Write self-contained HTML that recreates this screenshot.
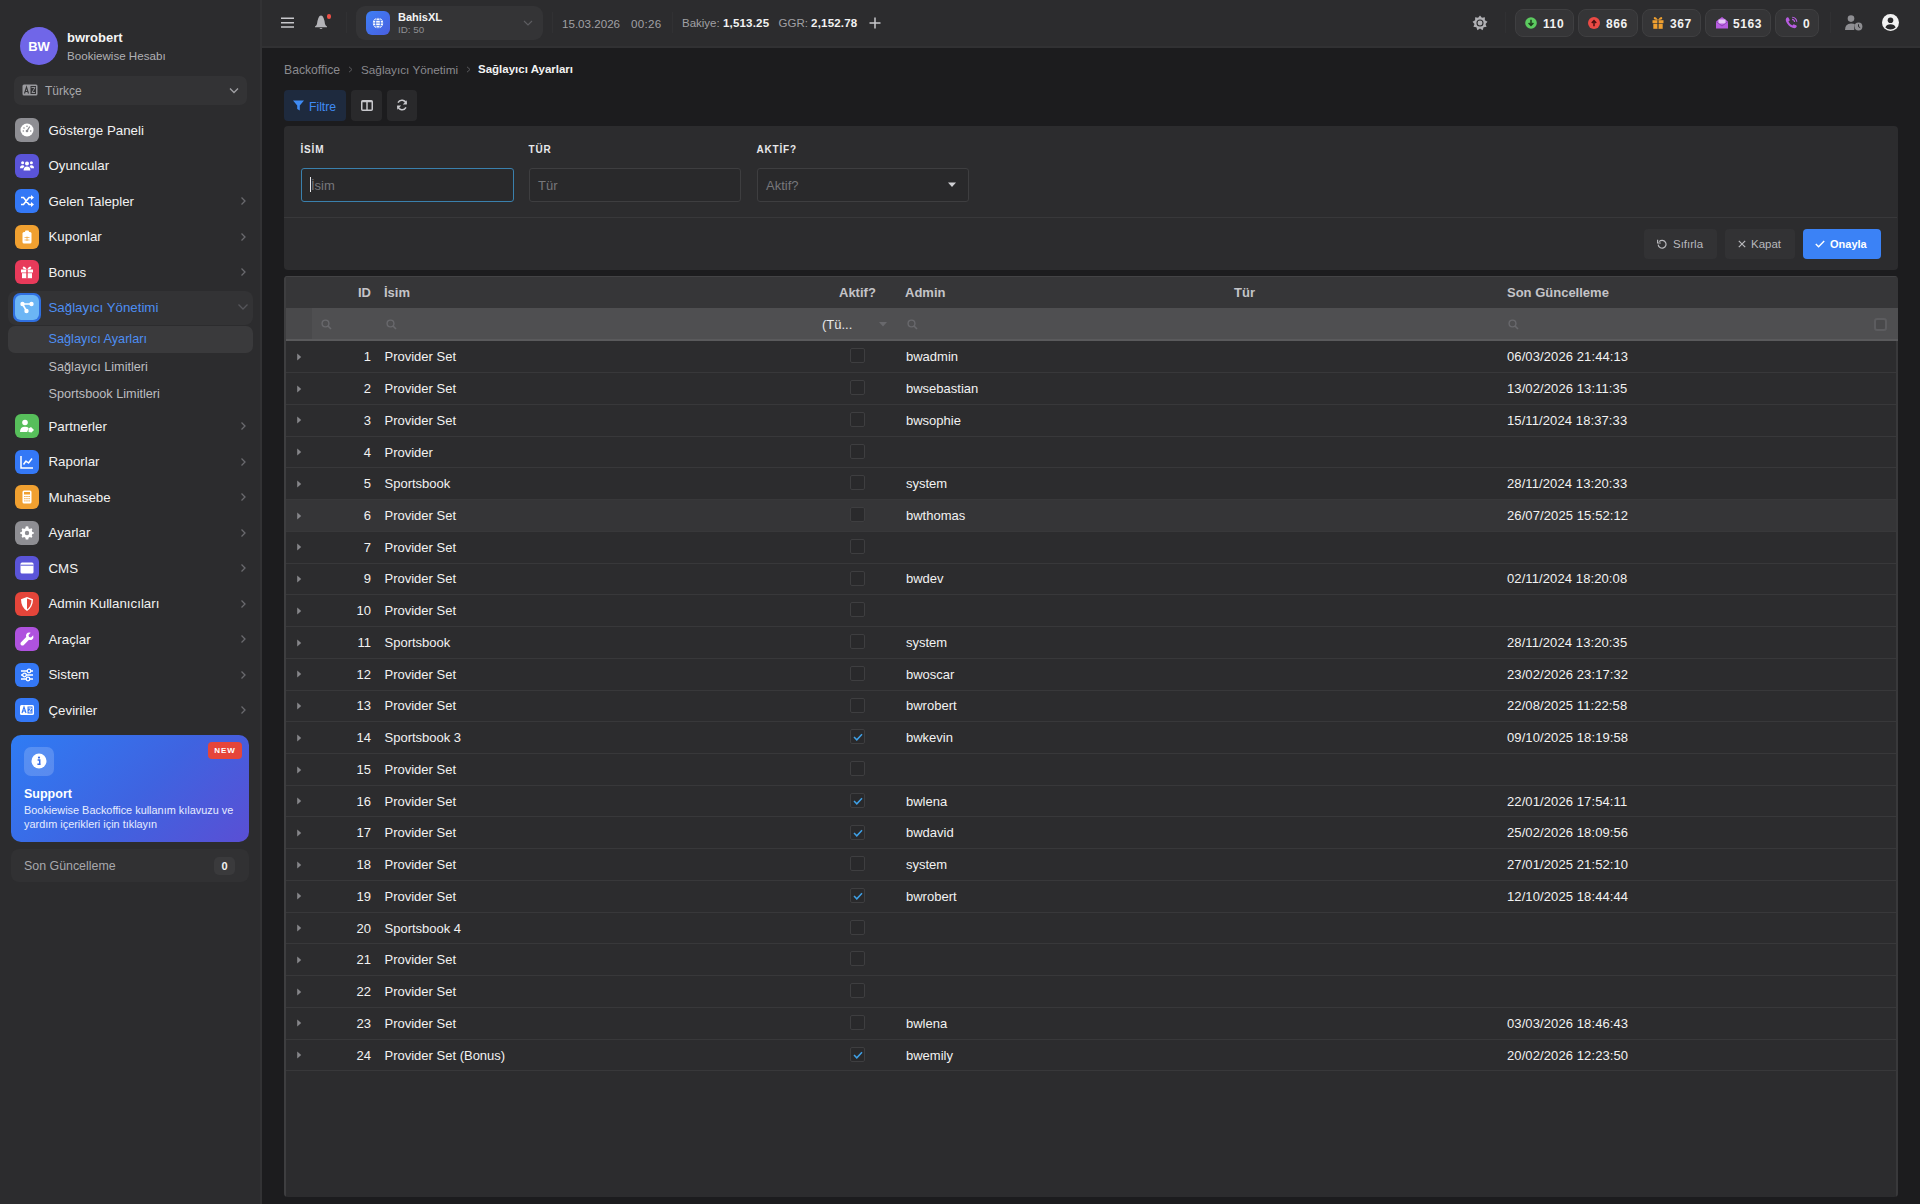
<!DOCTYPE html>
<html><head><meta charset="utf-8">
<style>
*{box-sizing:border-box;margin:0;padding:0}
html,body{width:1920px;height:1204px;overflow:hidden;background:#1c1c1e;font-family:"Liberation Sans",sans-serif;color:#f2f2f2}
.abs{position:absolute}
#side{position:absolute;left:0;top:0;width:262px;height:1204px;background:#2c2c2e;border-right:2px solid #323234}
#hdr{position:absolute;left:262px;top:0;width:1658px;height:48px;background:#2c2c2e;border-bottom:2px solid #313133}
.t{position:absolute;white-space:nowrap;line-height:1}
.mi{position:absolute;left:0;width:261px;height:30px}
.mi .ic{position:absolute;left:15px;top:3px;width:24px;height:24px;border-radius:6px}
.mi .ic svg{position:absolute;left:4px;top:4px;width:16px;height:16px}
.mi .lb{position:absolute;left:48.5px;top:8.5px;font-size:13.3px;color:#f2f2f2;white-space:nowrap;line-height:13px}
.mi .ch{position:absolute;left:239px;top:10px;width:8px;height:10px}
.card{position:absolute;background:#2c2c2e;border-radius:6px}
.pill{position:absolute;top:9px;height:28px;border:1px solid #3f3f41;background:#353537;border-radius:8px}
.pill .n{position:absolute;top:8px;font-size:12px;font-weight:bold;color:#f2f2f2;line-height:12px}
.sep{position:absolute;top:12px;width:1px;height:21px;background:#313133}
.row{position:absolute;left:285px;width:1612px;height:31.74px;border-bottom:1px solid #38383a}
.row .c{position:absolute;top:9px;font-size:13px;line-height:13px;color:#f2f2f2;white-space:nowrap}
.row .id{right:auto}
.cb{position:absolute;left:565px;top:7px;width:15px;height:15px;border:1px solid #434345;border-radius:2px;background:#2a2a2c}
.exp{position:absolute;left:12px;top:12px;width:0;height:0;border-top:4px solid transparent;border-bottom:4px solid transparent;border-left:4px solid #9a9a9c}
</style></head><body>

<!-- SIDEBAR -->
<div id="side">
  <div class="abs" style="left:20px;top:27px;width:38px;height:38px;border-radius:50%;background:#7066e8"></div>
  <div class="t" style="left:20px;top:40px;width:38px;text-align:center;font-size:13px;font-weight:bold;color:#fff">BW</div>
  <div class="t" style="left:67px;top:31px;font-size:13px;font-weight:bold;color:#f5f5f5">bwrobert</div>
  <div class="t" style="left:67px;top:50px;font-size:11.6px;color:#b0b0b4">Bookiewise Hesabı</div>
  <div class="abs" style="left:14px;top:76px;width:233px;height:29px;border-radius:7px;background:#333335"></div>
  <svg class="abs" style="left:22px;top:84px;width:16px;height:12px" viewBox="0 0 16 12"><rect x=".5" y=".5" width="15" height="11" rx="1.5" fill="#9a9a9e"/><path d="M2.5 9.5 L4.5 3 L6.5 9.5 M3.2 7.5 H5.8" stroke="#333335" stroke-width="1.1" fill="none"/><rect x="8.5" y="2" width="5.5" height="8" fill="#333335"/><path d="M9.5 3.5 H13 L10 8.5 H13" stroke="#9a9a9e" stroke-width=".9" fill="none"/></svg>
  <div class="t" style="left:45px;top:85px;font-size:12px;color:#a8a8ac">Türkçe</div>
  <svg class="abs" style="left:229px;top:87px;width:10px;height:7px" viewBox="0 0 10 7"><path d="M1 1.5 L5 5.5 L9 1.5" stroke="#a0a0a4" stroke-width="1.3" fill="none"/></svg>
  <div class="mi" style="top:115px"><div class="ic" style="background:#8e8e93"><svg viewBox="0 0 16 16"><circle cx="8" cy="8" r="6.5" fill="#fff"/><circle cx="8" cy="9" r="1.3" fill="#8e8e93"/><path d="M8 9 L10.5 5" stroke="#8e8e93" stroke-width="1.3" stroke-linecap="round"/><circle cx="5" cy="6" r=".8" fill="#8e8e93"/><circle cx="8" cy="4.3" r=".8" fill="#8e8e93"/><circle cx="4.3" cy="9" r=".8" fill="#8e8e93"/><circle cx="11.7" cy="9" r=".8" fill="#8e8e93"/></svg></div><div class="lb">Gösterge Paneli</div></div>
  <div class="mi" style="top:150.5px"><div class="ic" style="background:#5a54d8"><svg viewBox="0 0 16 16"><circle cx="8" cy="5.5" r="2" fill="#fff"/><circle cx="3.6" cy="4.8" r="1.5" fill="#fff"/><circle cx="12.4" cy="4.8" r="1.5" fill="#fff"/><path d="M4.6 12.5 Q4.6 8.5 8 8.5 Q11.4 8.5 11.4 12.5Z" fill="#fff"/><path d="M1 10.3 Q1 7.3 3.6 7.3 Q5 7.3 5.4 8.4 Q4.2 9.2 4 10.3Z" fill="#fff"/><path d="M15 10.3 Q15 7.3 12.4 7.3 Q11 7.3 10.6 8.4 Q11.8 9.2 12 10.3Z" fill="#fff"/></svg></div><div class="lb">Oyuncular</div></div>
  <div class="mi" style="top:186px"><div class="ic" style="background:#3478f6"><svg viewBox="0 0 16 16"><path d="M2 4.5 H4.5 L10 11.5 H12.5 M2 11.5 H4.5 L10 4.5 H12.5" stroke="#fff" stroke-width="1.6" fill="none"/><path d="M12 2 L15 4.5 L12 7Z M12 9 L15 11.5 L12 14Z" fill="#fff"/></svg></div><div class="lb">Gelen Talepler</div><svg class="ch" viewBox="0 0 8 10"><path d="M2.5 1.5 L6 5 L2.5 8.5" stroke="#6a6a6e" stroke-width="1.3" fill="none"/></svg></div>
  <div class="mi" style="top:221.5px"><div class="ic" style="background:#f0a030"><svg viewBox="0 0 16 16"><rect x="3.5" y="3" width="9" height="11.5" rx="1.5" fill="#fff"/><rect x="6" y="1.5" width="4" height="3" rx="1" fill="#fff"/><path d="M5.5 8.5 H10.5 M5.5 11 H10.5 M8 7.5 V12" stroke="#f0a030" stroke-width=".7"/></svg></div><div class="lb">Kuponlar</div><svg class="ch" viewBox="0 0 8 10"><path d="M2.5 1.5 L6 5 L2.5 8.5" stroke="#6a6a6e" stroke-width="1.3" fill="none"/></svg></div>
  <div class="mi" style="top:257px"><div class="ic" style="background:#e83a5a"><svg viewBox="0 0 16 16"><rect x="2" y="5.5" width="12" height="3" fill="#fff"/><rect x="3" y="9.2" width="10" height="5" fill="#fff"/><path d="M8 5.5 Q5 1 3.8 3.2 Q3 5 8 5.5 Q11 1 12.2 3.2 Q13 5 8 5.5" fill="#fff"/><rect x="7.3" y="5.5" width="1.4" height="9" fill="#e6374f"/></svg></div><div class="lb">Bonus</div><svg class="ch" viewBox="0 0 8 10"><path d="M2.5 1.5 L6 5 L2.5 8.5" stroke="#6a6a6e" stroke-width="1.3" fill="none"/></svg></div>
  <div class="mi" style="top:411px"><div class="ic" style="background:#57bf5b"><svg viewBox="0 0 16 16"><circle cx="6" cy="4.5" r="2.8" fill="#fff"/><path d="M1 14 Q1 8.8 6 8.8 Q8.5 8.8 9.7 10 L8.2 14Z" fill="#fff"/><path d="M9.5 10.5 L12 9 L15 12 L12.5 14.5 L9.5 14Z" fill="#fff"/></svg></div><div class="lb">Partnerler</div><svg class="ch" viewBox="0 0 8 10"><path d="M2.5 1.5 L6 5 L2.5 8.5" stroke="#6a6a6e" stroke-width="1.3" fill="none"/></svg></div>
  <div class="mi" style="top:446.5px"><div class="ic" style="background:#3478f6"><svg viewBox="0 0 16 16"><path d="M2 2 V14 H14" stroke="#fff" stroke-width="1.5" fill="none"/><path d="M4.5 10.5 L7 7 L9.5 9 L13 4.5" stroke="#fff" stroke-width="1.5" fill="none" stroke-linejoin="round"/></svg></div><div class="lb">Raporlar</div><svg class="ch" viewBox="0 0 8 10"><path d="M2.5 1.5 L6 5 L2.5 8.5" stroke="#6a6a6e" stroke-width="1.3" fill="none"/></svg></div>
  <div class="mi" style="top:482px"><div class="ic" style="background:#f0a030"><svg viewBox="0 0 16 16"><rect x="3.5" y="1.5" width="9" height="13" rx="1.5" fill="#fff"/><rect x="5" y="3" width="6" height="2.5" fill="#f0a030"/><path d="M5.2 7.5h1.4M7.3 7.5h1.4M9.4 7.5h1.4M5.2 9.7h1.4M7.3 9.7h1.4M9.4 9.7h1.4M5.2 11.9h1.4M7.3 11.9h1.4M9.4 11.9h1.4" stroke="#f0a030" stroke-width="1"/></svg></div><div class="lb">Muhasebe</div><svg class="ch" viewBox="0 0 8 10"><path d="M2.5 1.5 L6 5 L2.5 8.5" stroke="#6a6a6e" stroke-width="1.3" fill="none"/></svg></div>
  <div class="mi" style="top:517.5px"><div class="ic" style="background:#8e8e93"><svg viewBox="0 0 16 16"><path d="M8 1.2 L9.3 1.5 L9.6 3.2 L10.8 3.9 L12.4 3.2 L13.4 4.2 L12.8 5.8 L13.4 7 L15 7.4 V8.6 L13.4 9 L12.8 10.2 L13.4 11.8 L12.4 12.8 L10.8 12.1 L9.6 12.8 L9.3 14.5 H6.7 L6.4 12.8 L5.2 12.1 L3.6 12.8 L2.6 11.8 L3.2 10.2 L2.6 9 L1 8.6 V7.4 L2.6 7 L3.2 5.8 L2.6 4.2 L3.6 3.2 L5.2 3.9 L6.4 3.2 L6.7 1.5Z" fill="#fff"/><circle cx="8" cy="8" r="2.2" fill="#8e8e93"/></svg></div><div class="lb">Ayarlar</div><svg class="ch" viewBox="0 0 8 10"><path d="M2.5 1.5 L6 5 L2.5 8.5" stroke="#6a6a6e" stroke-width="1.3" fill="none"/></svg></div>
  <div class="mi" style="top:553px"><div class="ic" style="background:#5a54d8"><svg viewBox="0 0 16 16"><rect x="1.5" y="2.5" width="13" height="11" rx="1.5" fill="#fff"/><rect x="2.8" y="5.5" width="10.4" height="6.8" fill="#5856d6" opacity=".0"/><path d="M1.5 5.2 H14.5" stroke="#5856d6" stroke-width="1"/></svg></div><div class="lb">CMS</div><svg class="ch" viewBox="0 0 8 10"><path d="M2.5 1.5 L6 5 L2.5 8.5" stroke="#6a6a6e" stroke-width="1.3" fill="none"/></svg></div>
  <div class="mi" style="top:588.5px"><div class="ic" style="background:#e5453a"><svg viewBox="0 0 16 16"><path d="M8 1 L14 3.2 Q14 11 8 15 Q2 11 2 3.2Z" fill="#fff"/><path d="M8 2.6 L12.5 4.3 Q12.4 10.3 8 13.4Z" fill="#e5453a"/></svg></div><div class="lb">Admin Kullanıcıları</div><svg class="ch" viewBox="0 0 8 10"><path d="M2.5 1.5 L6 5 L2.5 8.5" stroke="#6a6a6e" stroke-width="1.3" fill="none"/></svg></div>
  <div class="mi" style="top:624px"><div class="ic" style="background:#af52de"><svg viewBox="0 0 16 16"><path d="M14.2 4.3 L12 6.5 L10 6 L9.5 4 L11.7 1.8 Q9 1 7.6 2.8 Q6.6 4.2 7.2 6 L1.8 11.4 Q1 12.4 1.9 13.9 Q3.5 15 4.6 14.2 L10 8.8 Q11.8 9.4 13.2 8.4 Q15 7 14.2 4.3Z" fill="#fff"/></svg></div><div class="lb">Araçlar</div><svg class="ch" viewBox="0 0 8 10"><path d="M2.5 1.5 L6 5 L2.5 8.5" stroke="#6a6a6e" stroke-width="1.3" fill="none"/></svg></div>
  <div class="mi" style="top:659.5px"><div class="ic" style="background:#3478f6"><svg viewBox="0 0 16 16"><path d="M2 4 H14 M2 8 H14 M2 12 H14" stroke="#fff" stroke-width="1.4"/><circle cx="10" cy="4" r="1.8" fill="#3478f6" stroke="#fff" stroke-width="1.3"/><circle cx="5.5" cy="8" r="1.8" fill="#3478f6" stroke="#fff" stroke-width="1.3"/><circle cx="9" cy="12" r="1.8" fill="#3478f6" stroke="#fff" stroke-width="1.3"/></svg></div><div class="lb">Sistem</div><svg class="ch" viewBox="0 0 8 10"><path d="M2.5 1.5 L6 5 L2.5 8.5" stroke="#6a6a6e" stroke-width="1.3" fill="none"/></svg></div>
  <div class="mi" style="top:695px"><div class="ic" style="background:#3478f6"><svg viewBox="0 0 16 16"><rect x="1" y="3" width="14" height="10" rx="1.5" fill="#fff"/><path d="M3 11 L5 5 L7 11 M3.8 9 H6.2" stroke="#3478f6" stroke-width="1.1" fill="none"/><rect x="8.5" y="4.5" width="5" height="7" fill="#3478f6"/><path d="M9.5 6 H12.5 L9.8 10 H12.6" stroke="#fff" stroke-width=".9" fill="none"/></svg></div><div class="lb">Çeviriler</div><svg class="ch" viewBox="0 0 8 10"><path d="M2.5 1.5 L6 5 L2.5 8.5" stroke="#6a6a6e" stroke-width="1.3" fill="none"/></svg></div>
  <div class="abs" style="left:8px;top:290.5px;width:245px;height:34px;border-radius:8px;background:#333335"></div>
  <div class="abs" style="left:13px;top:293px;width:28px;height:29px;border-radius:7px;background:#2f6fe0"></div>
  <div class="abs" style="left:15px;top:295px;width:24px;height:25px;border-radius:6px;background:#6cb6f5"><svg style="position:absolute;left:4px;top:4px;width:16px;height:16px" viewBox="0 0 16 16"><circle cx="3.5" cy="5" r="2.2" fill="#fff"/><circle cx="12.5" cy="5" r="2.2" fill="#fff"/><circle cx="7.5" cy="12" r="2.2" fill="#fff"/><path d="M3.5 5 H12.5 M3.5 5 L7.5 12" stroke="#fff" stroke-width="1.6"/></svg></div>
  <div class="t" style="left:48.5px;top:300.5px;font-size:13.3px;color:#4d8ef2">Sağlayıcı Yönetimi</div>
  <svg class="abs" style="left:237px;top:303px;width:12px;height:8px" viewBox="0 0 12 8"><path d="M1.5 1.5 L6 6 L10.5 1.5" stroke="#55555a" stroke-width="1.3" fill="none"/></svg>
  <div class="abs" style="left:8px;top:326px;width:245px;height:27px;border-radius:7px;background:#3a3a3c"></div>
  <div class="t" style="left:48.5px;top:333px;font-size:12.7px;color:#4d8ef2">Sağlayıcı Ayarları</div>
  <div class="t" style="left:48.5px;top:361px;font-size:12.7px;color:#bdbdc0">Sağlayıcı Limitleri</div>
  <div class="t" style="left:48.5px;top:388px;font-size:12.7px;color:#bdbdc0">Sportsbook Limitleri</div>
  <div class="abs" style="left:11px;top:735px;width:238px;height:107px;border-radius:10px;background:linear-gradient(135deg,#2f7cf4 0%,#3f63e0 55%,#5a4fd4 100%)"></div>
  <div class="abs" style="left:24px;top:747px;width:30px;height:29px;border-radius:7px;background:rgba(255,255,255,.18)"></div>
  <svg class="abs" style="left:31px;top:753px;width:16px;height:16px" viewBox="0 0 16 16"><circle cx="8" cy="8" r="7.5" fill="#fff"/><circle cx="8" cy="4.6" r="1.1" fill="#3a6ee8"/><path d="M6.6 7 H8.7 V11.3 H9.6 M6.4 11.3 H9.6" stroke="#3a6ee8" stroke-width="1.5" fill="none"/></svg>
  <div class="abs" style="left:208px;top:742px;width:34px;height:17px;border-radius:4px;background:#e5453a"></div>
  <div class="t" style="left:208px;top:747px;width:34px;text-align:center;font-size:8px;font-weight:bold;letter-spacing:1px;color:#fff">NEW</div>
  <div class="t" style="left:24px;top:787.5px;font-size:12.5px;font-weight:bold;color:#fff">Support</div>
  <div class="t" style="left:24px;top:805px;font-size:10.9px;color:#e6ecff">Bookiewise Backoffice kullanım kılavuzu ve</div>
  <div class="t" style="left:24px;top:818.5px;font-size:10.9px;color:#e6ecff">yardım içerikleri için tıklayın</div>
  <div class="abs" style="left:11px;top:849px;width:238px;height:33px;border-radius:8px;background:#313133"></div>
  <div class="t" style="left:24px;top:860px;font-size:12.4px;color:#a8a8ac">Son Güncelleme</div>
  <div class="abs" style="left:214px;top:857px;width:21px;height:18px;border-radius:5px;background:#3a3a3c"></div>
  <div class="t" style="left:214px;top:861px;width:21px;text-align:center;font-size:11px;font-weight:bold;color:#f2f2f2">0</div>
</div>

<!-- HEADER -->
<div id="hdr">
  <svg class="abs" style="left:19px;top:17px;width:13px;height:11px" viewBox="0 0 13 11"><path d="M0 1.3 H13 M0 5.7 H13 M0 10.1 H13" stroke="#c8c8cc" stroke-width="1.5"/></svg>
  <svg class="abs" style="left:52px;top:15px;width:14px;height:15px" viewBox="0 0 14 15"><path d="M7 .6 Q8.6 .6 9.6 3 Q10.6 5.5 11 9 Q11.5 10.5 13 11.6 V12.2 H1 V11.6 Q2.5 10.5 3 9 Q3.4 5.5 4.4 3 Q5.4 .6 7 .6Z" fill="#b4b4b8"/><path d="M5.4 13 Q7 15 8.6 13Z" fill="#b4b4b8"/></svg>
  <div class="abs" style="left:64.5px;top:14px;width:4.6px;height:4.6px;border-radius:50%;background:#ec5046"></div>
  <div class="sep" style="left:84px"></div>
  <div class="abs" style="left:94px;top:6px;width:187px;height:34px;border-radius:9px;background:#343436"></div>
  <div class="abs" style="left:104px;top:11px;width:24px;height:24px;border-radius:6px;background:linear-gradient(135deg,#3d7ff5,#4a5fe0)"></div>
  <svg class="abs" style="left:110px;top:17px;width:12px;height:12px" viewBox="0 0 12 12"><circle cx="6" cy="6" r="5.2" fill="#fff"/><path d="M.8 6 H11.2 M1.8 3.4 H10.2 M1.8 8.6 H10.2" stroke="#4272ea" stroke-width=".8"/><ellipse cx="6" cy="6" rx="2.4" ry="5.2" fill="none" stroke="#4272ea" stroke-width=".9"/></svg>
  <div class="t" style="left:136px;top:12px;font-size:11px;font-weight:bold;color:#f2f2f2">BahisXL</div>
  <div class="t" style="left:136px;top:25px;font-size:9.8px;color:#909094">ID: 50</div>
  <svg class="abs" style="left:261px;top:20px;width:10px;height:6px" viewBox="0 0 10 6"><path d="M1 1 L5 5 L9 1" stroke="#5e5e62" stroke-width="1.1" fill="none"/></svg>
  <div class="sep" style="left:290px"></div>
  <div class="t" style="left:300px;top:18px;font-size:11.6px;color:#a0a0a4">15.03.2026</div>
  <div class="t" style="left:369px;top:18px;font-size:11.6px;letter-spacing:.3px;color:#a0a0a4">00:26</div>
  <div class="sep" style="left:410px"></div>
  <div class="t" style="left:420px;top:18px;font-size:11.5px;color:#a0a0a4">Bakiye: <b style="color:#f2f2f2;letter-spacing:.2px">1,513.25</b></div>
  <div class="t" style="left:516.5px;top:18px;font-size:11.5px;color:#a0a0a4">GGR: <b style="color:#f2f2f2;letter-spacing:.2px">2,152.78</b></div>
  <svg class="abs" style="left:607px;top:17px;width:12px;height:12px" viewBox="0 0 12 12"><path d="M6 .5 V11.5 M.5 6 H11.5" stroke="#c8c8cc" stroke-width="1.5"/></svg>

  <svg class="abs" style="left:1210px;top:15px;width:16px;height:16px" viewBox="0 0 16 16"><path d="M8.00 0.40 L9.92 2.74 L12.89 2.18 L12.85 5.20 L15.48 6.68 L13.51 8.97 L14.58 11.80 L11.60 12.29 L10.60 15.14 L8.00 13.60 L5.40 15.14 L4.40 12.29 L1.42 11.80 L2.49 8.97 L0.52 6.68 L3.15 5.20 L3.11 2.18 L6.08 2.74Z" fill="#b0b0b4"/><circle cx="8" cy="8" r="3" fill="none" stroke="#2c2c2e" stroke-width="1.1"/></svg>
  <div class="sep" style="left:1243px"></div>

  <div class="pill" style="left:1253px;width:59px"></div>
  <svg class="abs" style="left:1263px;top:17px;width:12px;height:12px" viewBox="0 0 12 12"><circle cx="6" cy="6" r="5.8" fill="#5ccb60"/><path d="M6 2.8 V8.3 M3.6 6 L6 8.5 L8.4 6" stroke="#1c3a1c" stroke-width="1.5" fill="none"/></svg>
  <div class="t" style="left:1281px;top:17.5px;font-size:12px;font-weight:bold;letter-spacing:.6px;color:#f2f2f2">110</div>

  <div class="pill" style="left:1316px;width:60px"></div>
  <svg class="abs" style="left:1326px;top:17px;width:12px;height:12px" viewBox="0 0 12 12"><circle cx="6" cy="6" r="6" fill="#ec4a45"/><path d="M6 9.2 V4 M3.8 6 L6 3.6 L8.2 6" stroke="#4a1010" stroke-width="1.5" fill="none"/></svg>
  <div class="t" style="left:1344px;top:17.5px;font-size:12px;font-weight:bold;letter-spacing:.6px;color:#f2f2f2">866</div>

  <div class="pill" style="left:1380px;width:59px"></div>
  <svg class="abs" style="left:1390px;top:16px;width:12px;height:13px" viewBox="0 0 12 13"><path d="M6 4 Q3 -.5 1.8 1.8 Q1.2 3.6 6 4 Q9 -.5 10.2 1.8 Q10.8 3.6 6 4Z" fill="#f0a030"/><rect x=".5" y="4.2" width="11" height="3" fill="#f0a030"/><rect x="1.3" y="7.8" width="9.4" height="5" fill="#f0a030"/><rect x="5.4" y="4.2" width="1.2" height="8.6" fill="#353537"/></svg>
  <div class="t" style="left:1408px;top:17.5px;font-size:12px;font-weight:bold;letter-spacing:.6px;color:#f2f2f2">367</div>

  <div class="pill" style="left:1443px;width:66px"></div>
  <svg class="abs" style="left:1454px;top:16px;width:12px;height:13px" viewBox="0 0 12 13"><path d="M0 5.5 L6 1 L12 5.5 V12.5 H0Z" fill="#b75ce0"/><rect x="2.5" y="3.5" width="7" height="4" fill="#e6c8f5"/><path d="M0 5.5 L6 10 L12 5.5" stroke="#7a3aa0" stroke-width=".7" fill="none"/></svg>
  <div class="t" style="left:1471px;top:17.5px;font-size:12px;font-weight:bold;letter-spacing:.6px;color:#f2f2f2">5163</div>

  <div class="pill" style="left:1513px;width:44px"></div>
  <svg class="abs" style="left:1523px;top:16px;width:13px;height:13px" viewBox="0 0 13 13"><path d="M1.2 2.2 Q2.2 .8 3.4 1.4 L4.6 3.8 Q4.9 4.5 4.2 5 L3.4 5.6 Q4.6 8.4 7.4 9.6 L8 8.8 Q8.5 8.1 9.2 8.4 L11.6 9.6 Q12.2 10.8 10.8 11.8 Q9.6 12.6 7.6 11.8 Q2.8 9.8 1 5.2 Q.4 3.4 1.2 2.2Z" fill="#b75ce0"/><path d="M7.2 1.2 A5 5 0 0 1 11.8 5.8" stroke="#b75ce0" stroke-width="1.1" fill="none"/><path d="M7 3.4 A2.8 2.8 0 0 1 9.6 6" stroke="#b75ce0" stroke-width="1.1" fill="none"/></svg>
  <div class="t" style="left:1541px;top:17.5px;font-size:12px;font-weight:bold;color:#f2f2f2">0</div>

  <div class="sep" style="left:1568px"></div>
  <svg class="abs" style="left:1583px;top:15px;width:18px;height:16px" viewBox="0 0 18 16"><circle cx="6" cy="3.6" r="3.3" fill="#8e8e92"/><path d="M0 15 Q0 8.5 6 8.5 Q9 8.5 10 9.5 Q9 11 9.3 15Z" fill="#8e8e92"/><circle cx="13.5" cy="11.5" r="3.9" fill="#8e8e92"/><path d="M13.5 9.3 V11.7 L15.2 12.6" stroke="#28282a" stroke-width="1" fill="none"/></svg>
  <svg class="abs" style="left:1620px;top:14px;width:17px;height:17px" viewBox="0 0 17 17"><circle cx="8.5" cy="8.5" r="8.5" fill="#f2f2f2"/><circle cx="8.5" cy="6.3" r="2.8" fill="#28282a"/><path d="M3.4 13.6 Q4.5 10.3 8.5 10.3 Q12.5 10.3 13.6 13.6 Q11.5 15.5 8.5 15.5 Q5.5 15.5 3.4 13.6Z" fill="#28282a"/></svg>
</div>

<!-- MAIN -->

<!-- breadcrumb -->
<div class="t" style="left:284px;top:64px;font-size:12.2px;color:#8a8a8e">Backoffice</div>
<svg class="abs" style="left:348px;top:66px;width:5px;height:7px" viewBox="0 0 5 7"><path d="M1 .8 L4 3.5 L1 6.2" stroke="#5a5a5e" stroke-width="1" fill="none"/></svg>
<div class="t" style="left:361px;top:64px;font-size:11.75px;color:#8a8a8e">Sağlayıcı Yönetimi</div>
<svg class="abs" style="left:466px;top:66px;width:5px;height:7px" viewBox="0 0 5 7"><path d="M1 .8 L4 3.5 L1 6.2" stroke="#5a5a5e" stroke-width="1" fill="none"/></svg>
<div class="t" style="left:478px;top:64px;font-size:11.5px;font-weight:bold;color:#f2f2f2">Sağlayıcı Ayarları</div>

<!-- toolbar -->
<div class="abs" style="left:284px;top:90px;width:62px;height:31px;border-radius:4px;background:#1e2a3e"></div>
<svg class="abs" style="left:293px;top:100px;width:11px;height:11px" viewBox="0 0 11 11"><path d="M0 .5 H11 L6.8 5.5 V10.5 L4.2 9 V5.5Z" fill="#3f8bf5"/></svg>
<div class="t" style="left:309px;top:100.5px;font-size:12.2px;color:#3f8bf5">Filtre</div>
<div class="abs" style="left:351px;top:90px;width:31px;height:31px;border-radius:4px;background:#29292b"></div>
<svg class="abs" style="left:361px;top:100px;width:12px;height:11px" viewBox="0 0 12 11"><rect x=".75" y=".75" width="10.5" height="9.5" rx="1" fill="none" stroke="#c8c8cc" stroke-width="1.5"/><path d="M.75 1.6 H11.25 M6 1 V10.2" stroke="#c8c8cc" stroke-width="1.5"/></svg>
<div class="abs" style="left:387px;top:90px;width:30px;height:31px;border-radius:4px;background:#29292b"></div>
<svg class="abs" style="left:396px;top:99px;width:12px;height:12px" viewBox="0 0 12 12"><path d="M10.2 4.8 A4.4 4.4 0 0 0 2 3.6 M1.8 7.2 A4.4 4.4 0 0 0 10 8.4" stroke="#c8c8cc" stroke-width="1.5" fill="none"/><path d="M10.8 1.2 V5.4 H6.8Z M1.2 10.8 V6.6 H5.2Z" fill="#c8c8cc"/></svg>

<!-- filter card -->
<div class="card" style="left:284px;top:126px;width:1613.5px;height:144px;border-radius:4px"></div>
<div class="t" style="left:300.5px;top:145px;font-size:10px;font-weight:bold;letter-spacing:.8px;color:#e8e8ea">İSİM</div>
<div class="t" style="left:528.5px;top:145px;font-size:10px;font-weight:bold;letter-spacing:.8px;color:#e8e8ea">TÜR</div>
<div class="t" style="left:756.5px;top:145px;font-size:10px;font-weight:bold;letter-spacing:.8px;color:#e8e8ea">AKTİF?</div>
<div class="abs" style="left:301px;top:168px;width:213px;height:34px;border-radius:3px;border:1.5px solid #3a80ad;background:#29292b"></div>
<div class="abs" style="left:310px;top:177px;width:1px;height:15px;background:#e8e8ea"></div>
<div class="t" style="left:311px;top:179px;font-size:13px;color:#77777b">İsim</div>
<div class="abs" style="left:529px;top:168px;width:212px;height:34px;border-radius:3px;border:1px solid #3e3e40;background:#29292b"></div>
<div class="t" style="left:538px;top:179px;font-size:13px;color:#77777b">Tür</div>
<div class="abs" style="left:757px;top:168px;width:212px;height:34px;border-radius:3px;border:1px solid #3e3e40;background:#29292b"></div>
<div class="t" style="left:766px;top:179px;font-size:13px;color:#77777b">Aktif?</div>
<svg class="abs" style="left:947px;top:182px;width:10px;height:6px" viewBox="0 0 10 6"><path d="M1 .5 H9 L5 5Z" fill="#d0d0d4"/></svg>
<div class="abs" style="left:284px;top:217px;width:1613px;height:1px;background:#38383a"></div>
<div class="abs" style="left:1644px;top:229px;width:73px;height:30px;border-radius:4px;background:#323234"></div>
<svg class="abs" style="left:1657px;top:239px;width:10px;height:10px" viewBox="0 0 10 10"><path d="M2.2 2.6 A3.9 3.9 0 1 1 1.2 5.6" stroke="#b8b8bc" stroke-width="1.2" fill="none"/><path d="M.6 .8 V4 H3.8" stroke="#b8b8bc" stroke-width="1.2" fill="none"/></svg>
<div class="t" style="left:1673px;top:239px;font-size:11.5px;color:#b8b8bc">Sıfırla</div>
<div class="abs" style="left:1725px;top:229px;width:70px;height:30px;border-radius:4px;background:#323234"></div>
<svg class="abs" style="left:1738px;top:240px;width:8px;height:8px" viewBox="0 0 8 8"><path d="M.8 .8 L7.2 7.2 M7.2 .8 L.8 7.2" stroke="#b8b8bc" stroke-width="1.2"/></svg>
<div class="t" style="left:1751px;top:239px;font-size:11.5px;color:#b8b8bc">Kapat</div>
<div class="abs" style="left:1803px;top:229px;width:78px;height:30px;border-radius:4px;background:#3b82f6"></div>
<svg class="abs" style="left:1815px;top:240px;width:10px;height:8px" viewBox="0 0 10 8"><path d="M.8 4 L3.6 6.8 L9.2 1" stroke="#fff" stroke-width="1.4" fill="none"/></svg>
<div class="t" style="left:1830px;top:239px;font-size:11px;font-weight:bold;color:#fff">Onayla</div>

<div class="abs" style="left:284px;top:276px;width:1614px;height:920.5px;border-radius:4px;background:#2c2c2e;overflow:hidden">
<div class="abs" style="left:0;top:0;width:1614px;height:32px;background:#363638"></div><div class="abs" style="left:0;top:0;width:1614px;height:1px;background:#434345"></div>
<div class="abs" style="left:0;top:32px;width:1614px;height:31px;background:#4f4f51"></div>
<div class="abs" style="left:0;top:32px;width:28px;height:31px;background:#49494b"></div>
<div class="abs" style="left:0;top:63px;width:1614px;height:2.4px;background:#5a5a5c"></div>
<div class="abs" style="left:0;top:0;width:1.5px;height:921px;background:#3e3e40;z-index:2"></div><div class="abs" style="left:1612px;top:65px;width:2px;height:856px;background:#39393b;z-index:2"></div>
<div class="t" style="left:74px;top:10px;font-size:13px;font-weight:bold;color:#c4c4c8">ID</div>
<div class="t" style="left:100px;top:10px;font-size:13px;font-weight:bold;color:#c4c4c8">İsim</div>
<div class="t" style="left:555px;top:10px;font-size:13px;font-weight:bold;color:#c4c4c8">Aktif?</div>
<div class="t" style="left:621px;top:10px;font-size:13px;font-weight:bold;color:#c4c4c8">Admin</div>
<div class="t" style="left:950px;top:10px;font-size:13px;font-weight:bold;color:#c4c4c8">Tür</div>
<div class="t" style="left:1223px;top:10px;font-size:13px;font-weight:bold;color:#c4c4c8">Son Güncelleme</div>
<svg class="abs" style="left:37px;top:43px;width:11px;height:11px" viewBox="0 0 11 11"><circle cx="4.5" cy="4.5" r="3.4" stroke="#68686c" stroke-width="1.4" fill="none"/><path d="M7 7 L10 10" stroke="#68686c" stroke-width="1.6"/></svg>
<svg class="abs" style="left:102px;top:43px;width:11px;height:11px" viewBox="0 0 11 11"><circle cx="4.5" cy="4.5" r="3.4" stroke="#68686c" stroke-width="1.4" fill="none"/><path d="M7 7 L10 10" stroke="#68686c" stroke-width="1.6"/></svg>
<svg class="abs" style="left:623px;top:43px;width:11px;height:11px" viewBox="0 0 11 11"><circle cx="4.5" cy="4.5" r="3.4" stroke="#68686c" stroke-width="1.4" fill="none"/><path d="M7 7 L10 10" stroke="#68686c" stroke-width="1.6"/></svg>
<svg class="abs" style="left:1224px;top:43px;width:11px;height:11px" viewBox="0 0 11 11"><circle cx="4.5" cy="4.5" r="3.4" stroke="#68686c" stroke-width="1.4" fill="none"/><path d="M7 7 L10 10" stroke="#68686c" stroke-width="1.6"/></svg>
<div class="t" style="left:538px;top:42px;font-size:13px;color:#e8e8ea">(Tü...</div>
<svg class="abs" style="left:595px;top:46px;width:8px;height:5px" viewBox="0 0 8 5"><path d="M0 0 H8 L4 4.5Z" fill="#68686c"/></svg>
<div class="abs" style="left:1590px;top:42px;width:13px;height:13px;border:2px solid #5c5c5f;border-radius:3px;background:#49494b"></div>
<div class="abs" style="left:1px;top:65.40px;width:1612px;height:31.74px;background:transparent;border-bottom:1px solid #38383a"><svg class="abs" style="left:12px;top:11.5px;width:5px;height:8px" viewBox="0 0 5 8"><path d="M.2 .5 L4.2 4 L.2 7.5Z" fill="#86868a"/></svg><div class="t" style="right:1526px;top:8.9px;font-size:13px;color:#f2f2f2">1</div><div class="t" style="left:99.5px;top:8.9px;font-size:13px;color:#f2f2f2">Provider Set</div><div class="abs" style="left:565px;top:7px;width:15px;height:15px;border:1px solid #3e3e40;border-radius:2px;background:#29292b"></div><div class="t" style="left:621px;top:8.9px;font-size:13px;color:#f2f2f2">bwadmin</div><div class="t" style="left:1222px;top:8.9px;font-size:13px;letter-spacing:.1px;color:#f2f2f2">06/03/2026 21:44:13</div></div>
<div class="abs" style="left:1px;top:97.14px;width:1612px;height:31.74px;background:transparent;border-bottom:1px solid #38383a"><svg class="abs" style="left:12px;top:11.5px;width:5px;height:8px" viewBox="0 0 5 8"><path d="M.2 .5 L4.2 4 L.2 7.5Z" fill="#86868a"/></svg><div class="t" style="right:1526px;top:8.9px;font-size:13px;color:#f2f2f2">2</div><div class="t" style="left:99.5px;top:8.9px;font-size:13px;color:#f2f2f2">Provider Set</div><div class="abs" style="left:565px;top:7px;width:15px;height:15px;border:1px solid #3e3e40;border-radius:2px;background:#29292b"></div><div class="t" style="left:621px;top:8.9px;font-size:13px;color:#f2f2f2">bwsebastian</div><div class="t" style="left:1222px;top:8.9px;font-size:13px;letter-spacing:.1px;color:#f2f2f2">13/02/2026 13:11:35</div></div>
<div class="abs" style="left:1px;top:128.88px;width:1612px;height:31.74px;background:transparent;border-bottom:1px solid #38383a"><svg class="abs" style="left:12px;top:11.5px;width:5px;height:8px" viewBox="0 0 5 8"><path d="M.2 .5 L4.2 4 L.2 7.5Z" fill="#86868a"/></svg><div class="t" style="right:1526px;top:8.9px;font-size:13px;color:#f2f2f2">3</div><div class="t" style="left:99.5px;top:8.9px;font-size:13px;color:#f2f2f2">Provider Set</div><div class="abs" style="left:565px;top:7px;width:15px;height:15px;border:1px solid #3e3e40;border-radius:2px;background:#29292b"></div><div class="t" style="left:621px;top:8.9px;font-size:13px;color:#f2f2f2">bwsophie</div><div class="t" style="left:1222px;top:8.9px;font-size:13px;letter-spacing:.1px;color:#f2f2f2">15/11/2024 18:37:33</div></div>
<div class="abs" style="left:1px;top:160.62px;width:1612px;height:31.74px;background:transparent;border-bottom:1px solid #38383a"><svg class="abs" style="left:12px;top:11.5px;width:5px;height:8px" viewBox="0 0 5 8"><path d="M.2 .5 L4.2 4 L.2 7.5Z" fill="#86868a"/></svg><div class="t" style="right:1526px;top:8.9px;font-size:13px;color:#f2f2f2">4</div><div class="t" style="left:99.5px;top:8.9px;font-size:13px;color:#f2f2f2">Provider</div><div class="abs" style="left:565px;top:7px;width:15px;height:15px;border:1px solid #3e3e40;border-radius:2px;background:#29292b"></div><div class="t" style="left:621px;top:8.9px;font-size:13px;color:#f2f2f2"></div><div class="t" style="left:1222px;top:8.9px;font-size:13px;letter-spacing:.1px;color:#f2f2f2"></div></div>
<div class="abs" style="left:1px;top:192.36px;width:1612px;height:31.74px;background:transparent;border-bottom:1px solid #38383a"><svg class="abs" style="left:12px;top:11.5px;width:5px;height:8px" viewBox="0 0 5 8"><path d="M.2 .5 L4.2 4 L.2 7.5Z" fill="#86868a"/></svg><div class="t" style="right:1526px;top:8.9px;font-size:13px;color:#f2f2f2">5</div><div class="t" style="left:99.5px;top:8.9px;font-size:13px;color:#f2f2f2">Sportsbook</div><div class="abs" style="left:565px;top:7px;width:15px;height:15px;border:1px solid #3e3e40;border-radius:2px;background:#29292b"></div><div class="t" style="left:621px;top:8.9px;font-size:13px;color:#f2f2f2">system</div><div class="t" style="left:1222px;top:8.9px;font-size:13px;letter-spacing:.1px;color:#f2f2f2">28/11/2024 13:20:33</div></div>
<div class="abs" style="left:1px;top:224.10px;width:1612px;height:31.74px;background:#353537;border-bottom:1px solid #38383a"><svg class="abs" style="left:12px;top:11.5px;width:5px;height:8px" viewBox="0 0 5 8"><path d="M.2 .5 L4.2 4 L.2 7.5Z" fill="#86868a"/></svg><div class="t" style="right:1526px;top:8.9px;font-size:13px;color:#f2f2f2">6</div><div class="t" style="left:99.5px;top:8.9px;font-size:13px;color:#f2f2f2">Provider Set</div><div class="abs" style="left:565px;top:7px;width:15px;height:15px;border:1px solid #3e3e40;border-radius:2px;background:#2a2a2c"></div><div class="t" style="left:621px;top:8.9px;font-size:13px;color:#f2f2f2">bwthomas</div><div class="t" style="left:1222px;top:8.9px;font-size:13px;letter-spacing:.1px;color:#f2f2f2">26/07/2025 15:52:12</div></div>
<div class="abs" style="left:1px;top:255.84px;width:1612px;height:31.74px;background:transparent;border-bottom:1px solid #38383a"><svg class="abs" style="left:12px;top:11.5px;width:5px;height:8px" viewBox="0 0 5 8"><path d="M.2 .5 L4.2 4 L.2 7.5Z" fill="#86868a"/></svg><div class="t" style="right:1526px;top:8.9px;font-size:13px;color:#f2f2f2">7</div><div class="t" style="left:99.5px;top:8.9px;font-size:13px;color:#f2f2f2">Provider Set</div><div class="abs" style="left:565px;top:7px;width:15px;height:15px;border:1px solid #3e3e40;border-radius:2px;background:#29292b"></div><div class="t" style="left:621px;top:8.9px;font-size:13px;color:#f2f2f2"></div><div class="t" style="left:1222px;top:8.9px;font-size:13px;letter-spacing:.1px;color:#f2f2f2"></div></div>
<div class="abs" style="left:1px;top:287.58px;width:1612px;height:31.74px;background:transparent;border-bottom:1px solid #38383a"><svg class="abs" style="left:12px;top:11.5px;width:5px;height:8px" viewBox="0 0 5 8"><path d="M.2 .5 L4.2 4 L.2 7.5Z" fill="#86868a"/></svg><div class="t" style="right:1526px;top:8.9px;font-size:13px;color:#f2f2f2">9</div><div class="t" style="left:99.5px;top:8.9px;font-size:13px;color:#f2f2f2">Provider Set</div><div class="abs" style="left:565px;top:7px;width:15px;height:15px;border:1px solid #3e3e40;border-radius:2px;background:#29292b"></div><div class="t" style="left:621px;top:8.9px;font-size:13px;color:#f2f2f2">bwdev</div><div class="t" style="left:1222px;top:8.9px;font-size:13px;letter-spacing:.1px;color:#f2f2f2">02/11/2024 18:20:08</div></div>
<div class="abs" style="left:1px;top:319.32px;width:1612px;height:31.74px;background:transparent;border-bottom:1px solid #38383a"><svg class="abs" style="left:12px;top:11.5px;width:5px;height:8px" viewBox="0 0 5 8"><path d="M.2 .5 L4.2 4 L.2 7.5Z" fill="#86868a"/></svg><div class="t" style="right:1526px;top:8.9px;font-size:13px;color:#f2f2f2">10</div><div class="t" style="left:99.5px;top:8.9px;font-size:13px;color:#f2f2f2">Provider Set</div><div class="abs" style="left:565px;top:7px;width:15px;height:15px;border:1px solid #3e3e40;border-radius:2px;background:#29292b"></div><div class="t" style="left:621px;top:8.9px;font-size:13px;color:#f2f2f2"></div><div class="t" style="left:1222px;top:8.9px;font-size:13px;letter-spacing:.1px;color:#f2f2f2"></div></div>
<div class="abs" style="left:1px;top:351.06px;width:1612px;height:31.74px;background:transparent;border-bottom:1px solid #38383a"><svg class="abs" style="left:12px;top:11.5px;width:5px;height:8px" viewBox="0 0 5 8"><path d="M.2 .5 L4.2 4 L.2 7.5Z" fill="#86868a"/></svg><div class="t" style="right:1526px;top:8.9px;font-size:13px;color:#f2f2f2">11</div><div class="t" style="left:99.5px;top:8.9px;font-size:13px;color:#f2f2f2">Sportsbook</div><div class="abs" style="left:565px;top:7px;width:15px;height:15px;border:1px solid #3e3e40;border-radius:2px;background:#29292b"></div><div class="t" style="left:621px;top:8.9px;font-size:13px;color:#f2f2f2">system</div><div class="t" style="left:1222px;top:8.9px;font-size:13px;letter-spacing:.1px;color:#f2f2f2">28/11/2024 13:20:35</div></div>
<div class="abs" style="left:1px;top:382.80px;width:1612px;height:31.74px;background:transparent;border-bottom:1px solid #38383a"><svg class="abs" style="left:12px;top:11.5px;width:5px;height:8px" viewBox="0 0 5 8"><path d="M.2 .5 L4.2 4 L.2 7.5Z" fill="#86868a"/></svg><div class="t" style="right:1526px;top:8.9px;font-size:13px;color:#f2f2f2">12</div><div class="t" style="left:99.5px;top:8.9px;font-size:13px;color:#f2f2f2">Provider Set</div><div class="abs" style="left:565px;top:7px;width:15px;height:15px;border:1px solid #3e3e40;border-radius:2px;background:#29292b"></div><div class="t" style="left:621px;top:8.9px;font-size:13px;color:#f2f2f2">bwoscar</div><div class="t" style="left:1222px;top:8.9px;font-size:13px;letter-spacing:.1px;color:#f2f2f2">23/02/2026 23:17:32</div></div>
<div class="abs" style="left:1px;top:414.54px;width:1612px;height:31.74px;background:transparent;border-bottom:1px solid #38383a"><svg class="abs" style="left:12px;top:11.5px;width:5px;height:8px" viewBox="0 0 5 8"><path d="M.2 .5 L4.2 4 L.2 7.5Z" fill="#86868a"/></svg><div class="t" style="right:1526px;top:8.9px;font-size:13px;color:#f2f2f2">13</div><div class="t" style="left:99.5px;top:8.9px;font-size:13px;color:#f2f2f2">Provider Set</div><div class="abs" style="left:565px;top:7px;width:15px;height:15px;border:1px solid #3e3e40;border-radius:2px;background:#29292b"></div><div class="t" style="left:621px;top:8.9px;font-size:13px;color:#f2f2f2">bwrobert</div><div class="t" style="left:1222px;top:8.9px;font-size:13px;letter-spacing:.1px;color:#f2f2f2">22/08/2025 11:22:58</div></div>
<div class="abs" style="left:1px;top:446.28px;width:1612px;height:31.74px;background:transparent;border-bottom:1px solid #38383a"><svg class="abs" style="left:12px;top:11.5px;width:5px;height:8px" viewBox="0 0 5 8"><path d="M.2 .5 L4.2 4 L.2 7.5Z" fill="#86868a"/></svg><div class="t" style="right:1526px;top:8.9px;font-size:13px;color:#f2f2f2">14</div><div class="t" style="left:99.5px;top:8.9px;font-size:13px;color:#f2f2f2">Sportsbook 3</div><div class="abs" style="left:565px;top:7px;width:15px;height:15px;border:1px solid #3e3e40;border-radius:2px;background:#29292b"><svg style="position:absolute;left:2px;top:3px;width:10px;height:8px" viewBox="0 0 10 8"><path d="M1 4 L3.8 6.8 L9 1.2" stroke="#3fa0e6" stroke-width="1.5" fill="none"/></svg></div><div class="t" style="left:621px;top:8.9px;font-size:13px;color:#f2f2f2">bwkevin</div><div class="t" style="left:1222px;top:8.9px;font-size:13px;letter-spacing:.1px;color:#f2f2f2">09/10/2025 18:19:58</div></div>
<div class="abs" style="left:1px;top:478.02px;width:1612px;height:31.74px;background:transparent;border-bottom:1px solid #38383a"><svg class="abs" style="left:12px;top:11.5px;width:5px;height:8px" viewBox="0 0 5 8"><path d="M.2 .5 L4.2 4 L.2 7.5Z" fill="#86868a"/></svg><div class="t" style="right:1526px;top:8.9px;font-size:13px;color:#f2f2f2">15</div><div class="t" style="left:99.5px;top:8.9px;font-size:13px;color:#f2f2f2">Provider Set</div><div class="abs" style="left:565px;top:7px;width:15px;height:15px;border:1px solid #3e3e40;border-radius:2px;background:#29292b"></div><div class="t" style="left:621px;top:8.9px;font-size:13px;color:#f2f2f2"></div><div class="t" style="left:1222px;top:8.9px;font-size:13px;letter-spacing:.1px;color:#f2f2f2"></div></div>
<div class="abs" style="left:1px;top:509.76px;width:1612px;height:31.74px;background:transparent;border-bottom:1px solid #38383a"><svg class="abs" style="left:12px;top:11.5px;width:5px;height:8px" viewBox="0 0 5 8"><path d="M.2 .5 L4.2 4 L.2 7.5Z" fill="#86868a"/></svg><div class="t" style="right:1526px;top:8.9px;font-size:13px;color:#f2f2f2">16</div><div class="t" style="left:99.5px;top:8.9px;font-size:13px;color:#f2f2f2">Provider Set</div><div class="abs" style="left:565px;top:7px;width:15px;height:15px;border:1px solid #3e3e40;border-radius:2px;background:#29292b"><svg style="position:absolute;left:2px;top:3px;width:10px;height:8px" viewBox="0 0 10 8"><path d="M1 4 L3.8 6.8 L9 1.2" stroke="#3fa0e6" stroke-width="1.5" fill="none"/></svg></div><div class="t" style="left:621px;top:8.9px;font-size:13px;color:#f2f2f2">bwlena</div><div class="t" style="left:1222px;top:8.9px;font-size:13px;letter-spacing:.1px;color:#f2f2f2">22/01/2026 17:54:11</div></div>
<div class="abs" style="left:1px;top:541.50px;width:1612px;height:31.74px;background:transparent;border-bottom:1px solid #38383a"><svg class="abs" style="left:12px;top:11.5px;width:5px;height:8px" viewBox="0 0 5 8"><path d="M.2 .5 L4.2 4 L.2 7.5Z" fill="#86868a"/></svg><div class="t" style="right:1526px;top:8.9px;font-size:13px;color:#f2f2f2">17</div><div class="t" style="left:99.5px;top:8.9px;font-size:13px;color:#f2f2f2">Provider Set</div><div class="abs" style="left:565px;top:7px;width:15px;height:15px;border:1px solid #3e3e40;border-radius:2px;background:#29292b"><svg style="position:absolute;left:2px;top:3px;width:10px;height:8px" viewBox="0 0 10 8"><path d="M1 4 L3.8 6.8 L9 1.2" stroke="#3fa0e6" stroke-width="1.5" fill="none"/></svg></div><div class="t" style="left:621px;top:8.9px;font-size:13px;color:#f2f2f2">bwdavid</div><div class="t" style="left:1222px;top:8.9px;font-size:13px;letter-spacing:.1px;color:#f2f2f2">25/02/2026 18:09:56</div></div>
<div class="abs" style="left:1px;top:573.24px;width:1612px;height:31.74px;background:transparent;border-bottom:1px solid #38383a"><svg class="abs" style="left:12px;top:11.5px;width:5px;height:8px" viewBox="0 0 5 8"><path d="M.2 .5 L4.2 4 L.2 7.5Z" fill="#86868a"/></svg><div class="t" style="right:1526px;top:8.9px;font-size:13px;color:#f2f2f2">18</div><div class="t" style="left:99.5px;top:8.9px;font-size:13px;color:#f2f2f2">Provider Set</div><div class="abs" style="left:565px;top:7px;width:15px;height:15px;border:1px solid #3e3e40;border-radius:2px;background:#29292b"></div><div class="t" style="left:621px;top:8.9px;font-size:13px;color:#f2f2f2">system</div><div class="t" style="left:1222px;top:8.9px;font-size:13px;letter-spacing:.1px;color:#f2f2f2">27/01/2025 21:52:10</div></div>
<div class="abs" style="left:1px;top:604.98px;width:1612px;height:31.74px;background:transparent;border-bottom:1px solid #38383a"><svg class="abs" style="left:12px;top:11.5px;width:5px;height:8px" viewBox="0 0 5 8"><path d="M.2 .5 L4.2 4 L.2 7.5Z" fill="#86868a"/></svg><div class="t" style="right:1526px;top:8.9px;font-size:13px;color:#f2f2f2">19</div><div class="t" style="left:99.5px;top:8.9px;font-size:13px;color:#f2f2f2">Provider Set</div><div class="abs" style="left:565px;top:7px;width:15px;height:15px;border:1px solid #3e3e40;border-radius:2px;background:#29292b"><svg style="position:absolute;left:2px;top:3px;width:10px;height:8px" viewBox="0 0 10 8"><path d="M1 4 L3.8 6.8 L9 1.2" stroke="#3fa0e6" stroke-width="1.5" fill="none"/></svg></div><div class="t" style="left:621px;top:8.9px;font-size:13px;color:#f2f2f2">bwrobert</div><div class="t" style="left:1222px;top:8.9px;font-size:13px;letter-spacing:.1px;color:#f2f2f2">12/10/2025 18:44:44</div></div>
<div class="abs" style="left:1px;top:636.72px;width:1612px;height:31.74px;background:transparent;border-bottom:1px solid #38383a"><svg class="abs" style="left:12px;top:11.5px;width:5px;height:8px" viewBox="0 0 5 8"><path d="M.2 .5 L4.2 4 L.2 7.5Z" fill="#86868a"/></svg><div class="t" style="right:1526px;top:8.9px;font-size:13px;color:#f2f2f2">20</div><div class="t" style="left:99.5px;top:8.9px;font-size:13px;color:#f2f2f2">Sportsbook 4</div><div class="abs" style="left:565px;top:7px;width:15px;height:15px;border:1px solid #3e3e40;border-radius:2px;background:#29292b"></div><div class="t" style="left:621px;top:8.9px;font-size:13px;color:#f2f2f2"></div><div class="t" style="left:1222px;top:8.9px;font-size:13px;letter-spacing:.1px;color:#f2f2f2"></div></div>
<div class="abs" style="left:1px;top:668.46px;width:1612px;height:31.74px;background:transparent;border-bottom:1px solid #38383a"><svg class="abs" style="left:12px;top:11.5px;width:5px;height:8px" viewBox="0 0 5 8"><path d="M.2 .5 L4.2 4 L.2 7.5Z" fill="#86868a"/></svg><div class="t" style="right:1526px;top:8.9px;font-size:13px;color:#f2f2f2">21</div><div class="t" style="left:99.5px;top:8.9px;font-size:13px;color:#f2f2f2">Provider Set</div><div class="abs" style="left:565px;top:7px;width:15px;height:15px;border:1px solid #3e3e40;border-radius:2px;background:#29292b"></div><div class="t" style="left:621px;top:8.9px;font-size:13px;color:#f2f2f2"></div><div class="t" style="left:1222px;top:8.9px;font-size:13px;letter-spacing:.1px;color:#f2f2f2"></div></div>
<div class="abs" style="left:1px;top:700.20px;width:1612px;height:31.74px;background:transparent;border-bottom:1px solid #38383a"><svg class="abs" style="left:12px;top:11.5px;width:5px;height:8px" viewBox="0 0 5 8"><path d="M.2 .5 L4.2 4 L.2 7.5Z" fill="#86868a"/></svg><div class="t" style="right:1526px;top:8.9px;font-size:13px;color:#f2f2f2">22</div><div class="t" style="left:99.5px;top:8.9px;font-size:13px;color:#f2f2f2">Provider Set</div><div class="abs" style="left:565px;top:7px;width:15px;height:15px;border:1px solid #3e3e40;border-radius:2px;background:#29292b"></div><div class="t" style="left:621px;top:8.9px;font-size:13px;color:#f2f2f2"></div><div class="t" style="left:1222px;top:8.9px;font-size:13px;letter-spacing:.1px;color:#f2f2f2"></div></div>
<div class="abs" style="left:1px;top:731.94px;width:1612px;height:31.74px;background:transparent;border-bottom:1px solid #38383a"><svg class="abs" style="left:12px;top:11.5px;width:5px;height:8px" viewBox="0 0 5 8"><path d="M.2 .5 L4.2 4 L.2 7.5Z" fill="#86868a"/></svg><div class="t" style="right:1526px;top:8.9px;font-size:13px;color:#f2f2f2">23</div><div class="t" style="left:99.5px;top:8.9px;font-size:13px;color:#f2f2f2">Provider Set</div><div class="abs" style="left:565px;top:7px;width:15px;height:15px;border:1px solid #3e3e40;border-radius:2px;background:#29292b"></div><div class="t" style="left:621px;top:8.9px;font-size:13px;color:#f2f2f2">bwlena</div><div class="t" style="left:1222px;top:8.9px;font-size:13px;letter-spacing:.1px;color:#f2f2f2">03/03/2026 18:46:43</div></div>
<div class="abs" style="left:1px;top:763.68px;width:1612px;height:31.74px;background:transparent;border-bottom:1px solid #38383a"><svg class="abs" style="left:12px;top:11.5px;width:5px;height:8px" viewBox="0 0 5 8"><path d="M.2 .5 L4.2 4 L.2 7.5Z" fill="#86868a"/></svg><div class="t" style="right:1526px;top:8.9px;font-size:13px;color:#f2f2f2">24</div><div class="t" style="left:99.5px;top:8.9px;font-size:13px;color:#f2f2f2">Provider Set (Bonus)</div><div class="abs" style="left:565px;top:7px;width:15px;height:15px;border:1px solid #3e3e40;border-radius:2px;background:#29292b"><svg style="position:absolute;left:2px;top:3px;width:10px;height:8px" viewBox="0 0 10 8"><path d="M1 4 L3.8 6.8 L9 1.2" stroke="#3fa0e6" stroke-width="1.5" fill="none"/></svg></div><div class="t" style="left:621px;top:8.9px;font-size:13px;color:#f2f2f2">bwemily</div><div class="t" style="left:1222px;top:8.9px;font-size:13px;letter-spacing:.1px;color:#f2f2f2">20/02/2026 12:23:50</div></div>
</div>

</body></html>
